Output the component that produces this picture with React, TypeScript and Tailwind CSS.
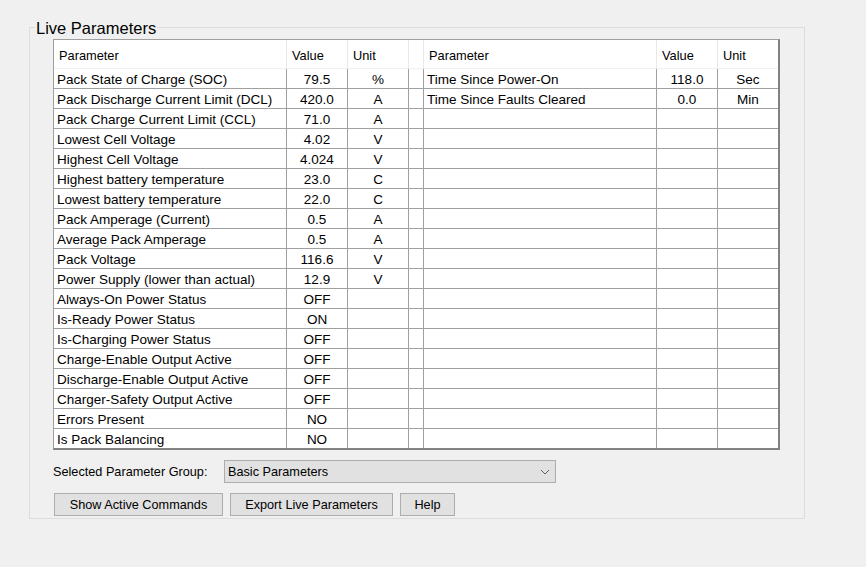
import React from "react";

const leftRows: [string, string, string][] = [
  ["Pack State of Charge (SOC)", "79.5", "%"],
  ["Pack Discharge Current Limit (DCL)", "420.0", "A"],
  ["Pack Charge Current Limit (CCL)", "71.0", "A"],
  ["Lowest Cell Voltage", "4.02", "V"],
  ["Highest Cell Voltage", "4.024", "V"],
  ["Highest battery temperature", "23.0", "C"],
  ["Lowest battery temperature", "22.0", "C"],
  ["Pack Amperage (Current)", "0.5", "A"],
  ["Average Pack Amperage", "0.5", "A"],
  ["Pack Voltage", "116.6", "V"],
  ["Power Supply (lower than actual)", "12.9", "V"],
  ["Always-On Power Status", "OFF", ""],
  ["Is-Ready Power Status", "ON", ""],
  ["Is-Charging Power Status", "OFF", ""],
  ["Charge-Enable Output Active", "OFF", ""],
  ["Discharge-Enable Output Active", "OFF", ""],
  ["Charger-Safety Output Active", "OFF", ""],
  ["Errors Present", "NO", ""],
  ["Is Pack Balancing", "NO", ""],
];

const rightRows: [string, string, string][] = [
  ["Time Since Power-On", "118.0", "Sec"],
  ["Time Since Faults Cleared", "0.0", "Min"],
];

const headers = ["Parameter", "Value", "Unit", "", "Parameter", "Value", "Unit"];

export default function App() {
  const rows = leftRows.map((l, i) => {
    const r = rightRows[i] ?? ["", "", ""];
    return [l[0], l[1], l[2], "", r[0], r[1], r[2]];
  });

  return (
    <div
      className="w-[866px] h-[567px] bg-[#f0f0f0] pl-[29px] pt-[27px] text-black"
      style={{ fontFamily: '"Liberation Sans", Arial, sans-serif' }}
    >
      {/* group box */}
      <div className="relative w-[776px] h-[492px] border border-[#dcdcdc] pl-[23px] pt-[11px]">
        <span className="absolute left-[5px] top-[-9px] bg-[#f0f0f0] px-[1px] text-[16.5px] leading-[18px]">
          Live Parameters
        </span>

        {/* data grid */}
        <div className="w-[727px] bg-white border-t border-l border-[#a0a0a0] border-r-2 border-b-2 border-r-[#828282] border-b-[#828282]">
          <div className="grid grid-cols-[233px_61px_61px_15px_233px_61px_60px]">
            {headers.map((h, i) => (
              <div
                key={"h" + i}
                className={`h-[29px] flex items-center pl-[5px] pt-[3px] text-[12.8px] border-b border-b-[#f0f0f0] ${
                  i < 6 ? "border-r border-r-[#e8e8e8]" : ""
                }`}
              >
                {h}
              </div>
            ))}
            {rows.map((row, ri) =>
              row.map((c, ci) => (
                <div
                  key={ri + "-" + ci}
                  className={`flex items-center pt-[3px] text-[13.5px] border-[#a0a0a0] ${
                    ri < rows.length - 1 ? "h-[20px] border-b" : "h-[19px]"
                  } ${ci < 6 ? "border-r" : ""} ${
                    ci === 0 || ci === 4 ? "pl-[3px]" : "justify-center"
                  }`}
                >
                  {c}
                </div>
              ))
            )}
          </div>
        </div>

        {/* parameter group select */}
        <div className="flex items-center mt-[10px] h-[23px]">
          <span className="w-[171px] pt-[2px] text-[12.7px]">Selected Parameter Group:</span>
          <div className="w-[332px] h-[23px] flex items-center justify-between bg-[#e1e1e1] border border-[#adadad] pl-[3px] pr-[4px] pt-[2px] text-[12.7px]">
            <span>Basic Parameters</span>
            <svg width="12" height="8" viewBox="0 0 12 8" className="mt-[-2px]">
              <polyline points="2,2 6,6 10,2" fill="none" stroke="#606060" strokeWidth="1" />
            </svg>
          </div>
        </div>

        {/* buttons */}
        <div className="flex gap-[7px] mt-[10px] ml-[1px]">
          {[
            ["Show Active Commands", "w-[169px]"],
            ["Export Live Parameters", "w-[163px]"],
            ["Help", "w-[55px]"],
          ].map(([label, w]) => (
            <button
              key={label}
              className={`${w} h-[23px] bg-[#e1e1e1] border border-[#adadad] pt-[2px] text-[12.7px] flex items-center justify-center`}
            >
              {label}
            </button>
          ))}
        </div>
      </div>
    </div>
  );
}
